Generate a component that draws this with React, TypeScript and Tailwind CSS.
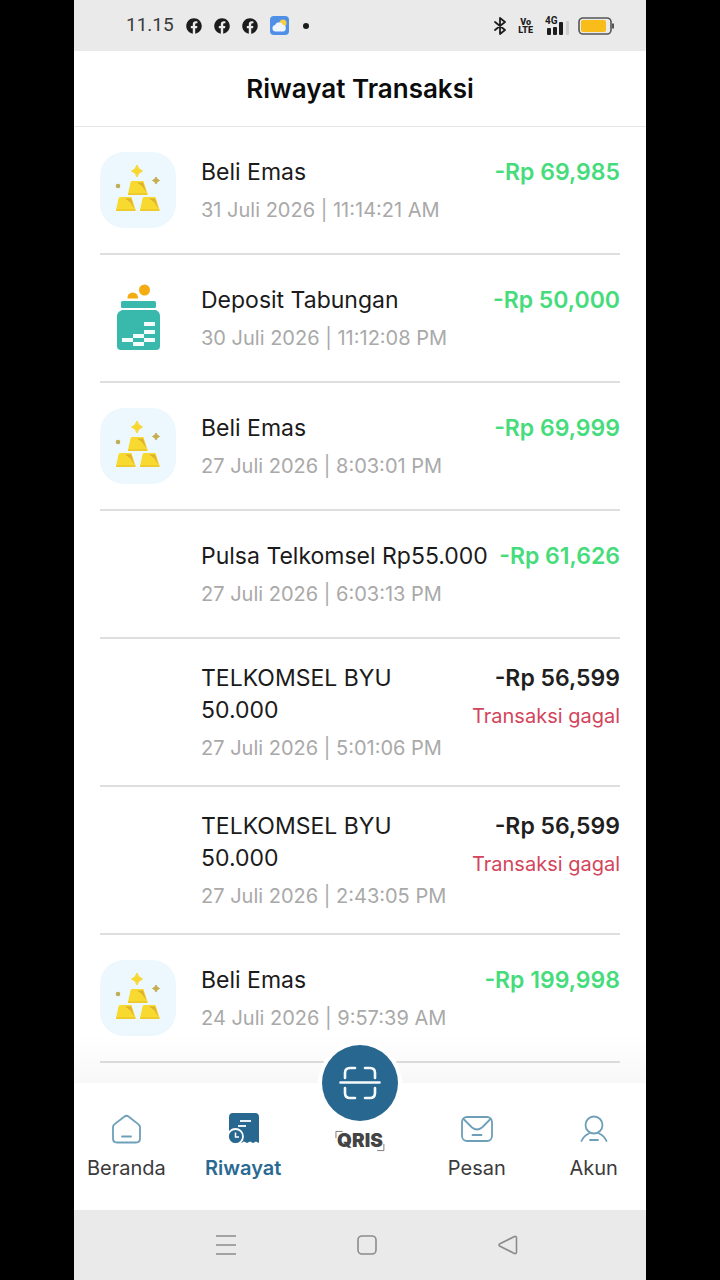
import type { ReactNode } from 'react'
import clsx from 'clsx'
import { FaFacebook } from 'react-icons/fa'

type TransactionIcon = 'gold' | 'savings' | 'none'

interface Transaction {
  id: number
  icon: TransactionIcon
  name: string
  date: string
  amount: string
  failed?: boolean
}

const TRANSACTIONS: Transaction[] = [
  { id: 1, icon: 'gold', name: 'Beli Emas', date: '31 Juli 2026 | 11:14:21 AM', amount: '-Rp 69,985' },
  { id: 2, icon: 'savings', name: 'Deposit Tabungan', date: '30 Juli 2026 | 11:12:08 PM', amount: '-Rp 50,000' },
  { id: 3, icon: 'gold', name: 'Beli Emas', date: '27 Juli 2026 | 8:03:01 PM', amount: '-Rp 69,999' },
  { id: 4, icon: 'none', name: 'Pulsa Telkomsel Rp55.000', date: '27 Juli 2026 | 6:03:13 PM', amount: '-Rp 61,626' },
  { id: 5, icon: 'none', name: 'TELKOMSEL BYU 50.000', date: '27 Juli 2026 | 5:01:06 PM', amount: '-Rp 56,599', failed: true },
  { id: 6, icon: 'none', name: 'TELKOMSEL BYU 50.000', date: '27 Juli 2026 | 2:43:05 PM', amount: '-Rp 56,599', failed: true },
  { id: 7, icon: 'gold', name: 'Beli Emas', date: '24 Juli 2026 | 9:57:39 AM', amount: '-Rp 199,998' },
]

export default function App() {
  return (
    <div className="min-h-screen bg-black px-[74px] font-['Inter',sans-serif]">
      <div className="flex min-h-screen flex-col bg-white">
        <StatusBar />
        <header className="flex h-19 items-center justify-center border-b border-[#e6e6e6]">
          <h1 className="text-[26px] font-semibold text-[#0c0c0c]">Riwayat Transaksi</h1>
        </header>
        <main className="flex-1 px-[26px]">
          <ul>
            {TRANSACTIONS.map((t) => (
              <TransactionRow key={t.id} transaction={t} />
            ))}
          </ul>
        </main>
        <BottomNav />
        <SystemBar />
      </div>
    </div>
  )
}

function StatusBar() {
  return (
    <div className="flex h-[51px] items-center justify-between bg-[#eaeaea] pr-8 pl-[52px] text-[#1c1c1c]">
      <div className="flex items-center gap-3">
        <span className="font-['Roboto',sans-serif] text-[19px] text-[#3a3a3a]">11.15</span>
        <FaFacebook size={16} />
        <FaFacebook size={16} />
        <FaFacebook size={16} />
        <WeatherIcon />
        <span className="ml-0.5 size-1.5 rounded-full bg-[#1c1c1c]" />
      </div>
      <div className="flex items-center">
        <svg className="mr-3" width="12" height="18" viewBox="0 0 12 18" fill="none" stroke="currentColor" strokeWidth="1.8" strokeLinejoin="round" strokeLinecap="round">
          <path d="M1 5l10 8-5 4V1l5 4-10 8" />
        </svg>
        <div className="mr-3 text-center font-['Roboto',sans-serif] text-[9px] leading-[8px] font-black">
          <div>Vo</div>
          <div>LTE</div>
        </div>
        <div className="mr-2 flex flex-col">
          <span className="font-['Roboto',sans-serif] text-[10px] leading-[8px] font-bold">4G</span>
          <svg className="-mt-1" width="25" height="14" viewBox="0 0 25 14" fill="currentColor">
            <rect x="2" y="7" width="4" height="7" rx="1" />
            <rect x="8" y="6" width="4" height="8" rx="1" />
            <rect x="14" y="1" width="4" height="13" rx="1" />
            <rect x="21" y="0" width="3" height="14" rx="1" fill="#cfcfcf" />
          </svg>
        </div>
        <svg width="36" height="18" viewBox="0 0 36 18">
          <rect x="1" y="1" width="32" height="16" rx="4" fill="none" stroke="#555" strokeWidth="1.6" />
          <rect x="3" y="3" width="25" height="12" rx="2" fill="#f8bd18" />
          <path d="M35 6.5v5" stroke="#555" strokeWidth="2" />
        </svg>
      </div>
    </div>
  )
}

function WeatherIcon() {
  return (
    <svg width="19" height="19" viewBox="0 0 19 19">
      <rect width="19" height="19" rx="4" fill="#4f8fe8" />
      <circle cx="13" cy="7" r="3.5" fill="#f7cf45" />
      <path d="M5.5 15.5a3.3 3.3 0 0 1-.5-6.5 4.3 4.3 0 0 1 8-.2 3.4 3.4 0 0 1 0 6.7z" fill="#eef5fd" />
    </svg>
  )
}

function TransactionRow({ transaction }: { transaction: Transaction }) {
  const { icon, name, date, amount, failed } = transaction

  return (
    <li className="flex items-center border-b-2 border-[#dedede] py-[23px]">
      <div className="mr-[25px] flex h-20 w-19 shrink-0 items-center justify-center">
        {icon === 'gold' && <GoldIcon />}
        {icon === 'savings' && <SavingsIcon />}
      </div>
      <div className="flex min-w-0 flex-1 items-start gap-2">
        <div className="flex min-w-0 flex-1 flex-col gap-2">
          <p className="text-[23px] leading-8 text-[#1b1b1b]">{name}</p>
          <p className="text-[20px] leading-7 whitespace-nowrap text-[#a9a9a9]">{date}</p>
        </div>
        <div className="flex shrink-0 flex-col items-end gap-2">
          <p
            className={clsx(
              'text-[23px] leading-8 font-semibold',
              failed ? 'text-[#1f1f1f]' : 'text-[#46dc7c]',
            )}
          >
            {amount}
          </p>
          {failed && <p className="text-[20px] leading-7 text-[#d3455b]">Transaksi gagal</p>}
        </div>
      </div>
    </li>
  )
}

function GoldBar({ x, y }: { x: number; y: number }) {
  return (
    <g transform={`translate(${x} ${y})`}>
      <path d="M4 0h11.5l4 13H0L2.5 1.500Q2.800 0 4 0z" fill="#f8d92f" />
      <path d="M9 1.500h6l3.500 10-4.500-6.500z" fill="#dfb02c" />
      <path d="M0 12.200h19.500V14H0z" fill="#eec92c" />
    </g>
  )
}

function GoldIcon() {
  return (
    <svg width="76" height="76" viewBox="0 0 76 76">
      <rect width="76" height="76" rx="24" fill="#edf8fe" />
      <GoldBar x={28} y={29} />
      <GoldBar x={16} y={45} />
      <GoldBar x={40} y={45} />
      <path d="M37 13q1 4.500 5.500 6-4.500 1.500-5.500 6-1-4.500-5.500-6 4.500-1.500 5.500-6z" fill="#f8d72f" stroke="#f8d72f" />
      <path d="M56 25q.7 2.700 3.500 3.500-2.800.8-3.500 3.500-.7-2.700-3.500-3.500 2.800-.8 3.500-3.500z" fill="#c5ac4c" stroke="#c5ac4c" />
      <circle cx="18" cy="34" r="2.3" fill="#bfae56" />
    </svg>
  )
}

function SavingsIcon() {
  return (
    <svg width="76" height="76" viewBox="0 0 76 76">
      <circle cx="44.5" cy="10" r="5.5" fill="#f5ab12" />
      <path d="M27.500 18.500a5.300 5.300 0 1 1 10.500 0z" fill="#f5ab12" />
      <rect x="21" y="21" width="35" height="7" rx="1.5" fill="#38b9ac" />
      <path d="M22 30h34q4 2 4 6v30q0 4-4 4H21q-4 0-4-4V36q0-4 5-6z" fill="#38b9ac" />
      <g fill="#f3fcfb">
        <rect x="44" y="42" width="11" height="4" />
        <rect x="44" y="50" width="11" height="4" />
        <rect x="33" y="54" width="11" height="4" />
        <rect x="22" y="58" width="11" height="4" />
        <rect x="44" y="58" width="11" height="4" />
        <rect x="33" y="62" width="11" height="4" />
      </g>
    </svg>
  )
}

function NavItem({ label, icon, active }: { label: string; icon: ReactNode; active?: boolean }) {
  return (
    <a
      href="#"
      aria-current={active ? 'page' : undefined}
      className={clsx(
        'flex flex-col items-center gap-2 pt-[29px] text-[20px] leading-7',
        active ? 'font-semibold text-[#2a6a92]' : 'text-[#3b3b3b]',
      )}
    >
      {icon}
      {label}
    </a>
  )
}

function BottomNav() {
  return (
    <nav className="relative h-[127px] bg-white">
      <div className="pointer-events-none absolute inset-x-0 -top-12 h-12 bg-linear-to-b from-black/0 to-black/3" />
      <div className="relative -mx-1.5 grid grid-cols-5">
        <NavItem label="Beranda" icon={<HomeIcon />} />
        <NavItem label="Riwayat" icon={<HistoryIcon />} active />
        <button type="button" className="-mt-[38px] flex flex-col items-center gap-2">
          <span className="flex size-19 items-center justify-center rounded-full bg-[#28678f] ring-4 ring-white">
            <ScanIcon />
          </span>
          <QrisMark />
        </button>
        <NavItem label="Pesan" icon={<MailIcon />} />
        <NavItem label="Akun" icon={<UserIcon />} />
      </div>
    </nav>
  )
}

function HomeIcon() {
  return (
    <svg className="text-[#6d9fb9]" width="34" height="34" viewBox="0 0 34 34" fill="none" stroke="currentColor" strokeWidth="1.8" strokeLinecap="round" strokeLinejoin="round">
      <path d="M4 15q0-1.500 1.300-2.600L15.500 4.500q2-1.500 4 0l10 7.900Q31 13.500 31 15v11.500q0 4-4 4H8q-4 0-4-4z" />
      <path d="M13 24.500h9" />
    </svg>
  )
}

function HistoryIcon() {
  return (
    <svg width="34" height="34" viewBox="0 0 34 34" fill="none">
      <path d="M6 1h23q4 0 4 4v26l-3-1.500-3 1.500-3-1.500-3 1.500-3-1.500-3 1.500H7q-4-1-4-4V5q0-4 4-4z" fill="#28678f" />
      <path d="M14 9h11M12 14h8" stroke="#e5f1f7" strokeWidth="2.2" />
      <circle cx="9.5" cy="24.5" r="7.5" fill="#28678f" stroke="#fff" strokeWidth="1.8" />
      <path d="M9.500 20.500v4.500H13" stroke="#fff" strokeWidth="1.5" />
    </svg>
  )
}

function MailIcon() {
  return (
    <svg className="text-[#6d9fb9]" width="34" height="34" viewBox="0 0 34 34" fill="none" stroke="currentColor" strokeWidth="1.8" strokeLinecap="round" strokeLinejoin="round">
      <rect x="2" y="5" width="30" height="24" rx="5" />
      <path d="M3.500 7l8.500 8.500q5 4 10 0L30.500 7M12.500 23h9" />
    </svg>
  )
}

function UserIcon() {
  return (
    <svg className="text-[#6d9fb9]" width="34" height="34" viewBox="0 0 34 34" fill="none" stroke="currentColor" strokeWidth="1.8" strokeLinecap="round">
      <circle cx="17" cy="13" r="8.5" />
      <path d="M4.500 29Q7 23.500 12 21.500M22 21.500q5 2 7.500 7.500M13 28h8" />
    </svg>
  )
}

function ScanIcon() {
  return (
    <svg width="42" height="34" viewBox="0 0 42 34" fill="none" stroke="#f4fafd" strokeWidth="2.6" strokeLinecap="round">
      <path d="M6 12V7q0-5 5-5h5M26 2h5q5 0 5 5v5M6 22v5q0 5 5 5h5M26 32h5q5 0 5-5v-5" />
      <path d="M1.500 16.500h39" />
    </svg>
  )
}

function QrisMark() {
  return (
    <span className="relative px-0.5 py-0.5 text-[19px] leading-5 font-black text-[#444]">
      QRIS
      <svg className="absolute inset-0 size-full" viewBox="0 0 52 24" fill="none" stroke="#777" strokeWidth="1">
        <path d="M1 9V2h7M51 15v7h-7" />
      </svg>
    </span>
  )
}

function SystemBar() {
  return (
    <div className="flex h-[70px] items-center justify-between bg-[#eaeaea] pr-[127px] pl-[141px] text-[#8c8c8c]">
      <button type="button" aria-label="Recent apps">
        <svg width="22" height="22" viewBox="0 0 22 22" stroke="currentColor" strokeWidth="1.6">
          <path d="M1 2h20M1 11h20M1 20h20" />
        </svg>
      </button>
      <button type="button" aria-label="Home">
        <svg width="22" height="22" viewBox="0 0 22 22" fill="none" stroke="currentColor" strokeWidth="1.6">
          <rect x="2" y="2" width="18" height="18" rx="4" />
        </svg>
      </button>
      <button type="button" aria-label="Back">
        <svg width="22" height="22" viewBox="0 0 22 22" fill="none" stroke="currentColor" strokeWidth="1.6" strokeLinejoin="round">
          <path d="M2.500 10q-1 1 0 2l15 7.500q2 .5 2-1.500V4q0-2-2-1.500z" />
        </svg>
      </button>
    </div>
  )
}
